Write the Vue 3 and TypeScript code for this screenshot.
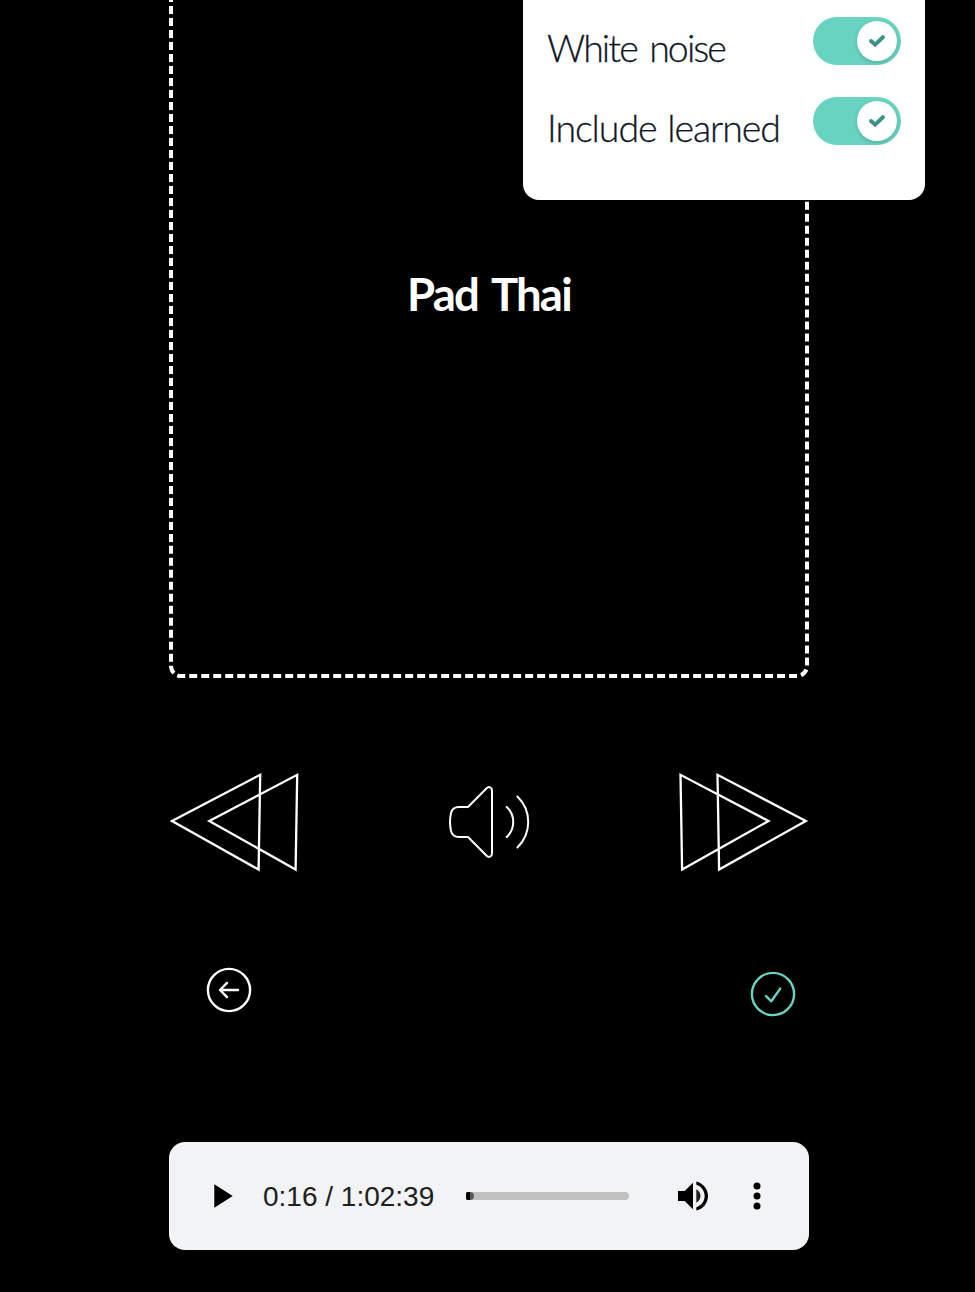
<script setup lang="ts">
interface Option {
  key: string
  label: string
}

const options: Option[] = [
  { key: 'noise', label: 'White noise' },
  { key: 'learned', label: 'Include learned' },
]

const word = 'Pad Thai'
const time = '0:16 / 1:02:39'
</script>

<template>
  <main class="page">
    <section class="card">
      <svg class="outline" width="640" height="678" viewBox="0 0 640 678">
        <path d="M638 -14.3V666A10 10 0 0 1 628 676H12A10 10 0 0 1 2 666V-14" />
      </svg>
      <h1 class="word">{{ word }}</h1>
    </section>

    <nav class="controls">
      <svg class="line-icon" width="128" height="102" viewBox="169 771 128 102">
        <path d="M172 821L260.2 774.8L258.6 869.6ZM209.3 821L297.2 774.8L295.6 869.6Z" />
      </svg>
      <svg class="line-icon speaker" width="84" height="76" viewBox="447 784 84 76">
        <path d="M468 807L486.6 788.3C488.8 786 492 787.2 492 790.6V853.2C492 856.8 488.8 858 486.6 855.8L468 837H458.8C454 837 452 834.8 451 831C449.8 825.5 449.8 818.5 451 813C452 809.2 454 807 458.8 807Z" />
        <path d="M506.7 807Q513.2 813 513.2 822T506.7 837M517.4 796.5Q528.2 807 528.2 822T517.4 847.5" />
      </svg>
      <svg class="line-icon" width="128" height="102" viewBox="681 771 128 102">
        <path d="M805.8 821L717.5 774.8L719.1 869.6ZM768.5 821L680.5 774.8L682.1 869.6Z" />
      </svg>
    </nav>

    <div class="actions">
      <svg class="round" width="46" height="46" viewBox="0 0 46 46">
        <circle cx="23" cy="23" r="21.1" />
        <path d="M32 23H14.5M21 15.9L14 23L21 30.1" />
      </svg>
      <svg class="round done" width="46" height="46" viewBox="0 0 46 46">
        <circle cx="23" cy="23" r="21.1" />
        <path d="M16 25.1L21.3 30.3L30.2 17.6" />
      </svg>
    </div>

    <section class="player">
      <svg class="play" width="40" height="40" viewBox="0 0 24 24"><path d="M8 5v14l11-7z" /></svg>
      <span class="time">{{ time }}</span>
      <div class="track"><div class="buffered"></div><div class="played"></div></div>
      <svg class="volume" width="40" height="40" viewBox="0 0 24 24">
        <path d="M3 9v6h4l5 5V4L7 9H3zM14 3.23v2.06c2.89.86 5 3.54 5 6.71s-2.11 5.85-5 6.71v2.06c4.01-.91 7-4.49 7-8.77s-2.99-7.86-7-8.77z" />
        <path class="wave" d="M16.5 12c0-1.77-1.02-3.29-2.5-4.03v8.05c1.48-.73 2.5-2.25 2.5-4.02z" />
      </svg>
      <svg class="more" width="40" height="40" viewBox="0 0 24 24">
        <circle cx="12" cy="6" r="2.1" /><circle cx="12" cy="12" r="2.1" /><circle cx="12" cy="18" r="2.1" />
      </svg>
    </section>

    <aside class="settings">
      <div v-for="option in options" :key="option.key" class="option">
        <span class="label" :class="option.key">{{ option.label }}</span>
        <span class="toggle">
          <span class="knob">
            <svg width="40" height="40" viewBox="0 0 40 40"><path d="M14 20.1L18.1 23.6L25.9 16.2" /></svg>
          </span>
        </span>
      </div>
    </aside>
  </main>
</template>

<style>
body {
  margin: 0;
  background: #000;
}
</style>

<style scoped>
.page {
  position: relative;
  box-sizing: border-box;
  width: 975px;
  height: 1292px;
  padding: 0 166px 0 169px;
  overflow: hidden;
  background: #000;
  font-family: Lato, "Liberation Sans", sans-serif;
}
svg {
  display: block;
  flex: none;
}
.card {
  display: grid;
  height: 678px;
}
.outline,
.word {
  grid-area: 1 / 1;
}
.outline path {
  fill: none;
  stroke: #fff;
  stroke-width: 4;
  stroke-dasharray: 8 3.997;
}
.word {
  justify-self: center;
  margin: 266px 0 0;
  color: #fff;
  font-size: 45.5px;
  font-weight: 700;
  line-height: 56px;
  letter-spacing: -1.8px;
  word-spacing: 5px;
  white-space: nowrap;
}
.controls {
  display: flex;
  justify-content: space-between;
  align-items: center;
  height: 102px;
  margin-top: 93px;
}
.line-icon {
  overflow: visible;
  fill: none;
  stroke: #fff;
  stroke-width: 2.3;
}
.speaker {
  stroke-width: 2;
  stroke-linecap: round;
  stroke-linejoin: round;
}
.actions {
  display: flex;
  justify-content: space-between;
  margin-top: 94px;
  padding: 0 13px 0 37px;
}
.round {
  fill: none;
  stroke: #fff;
  stroke-width: 2.4;
  stroke-linecap: round;
  stroke-linejoin: round;
}
.round.done {
  margin-top: 4px;
  stroke: #68d3c0;
}
.player {
  display: flex;
  align-items: center;
  box-sizing: border-box;
  height: 108px;
  margin-top: 125px;
  padding: 0 32px;
  border-radius: 16px;
  background: #f1f3f5;
}
.time {
  width: 171px;
  margin: 0 32px 0 22px;
  padding-top: 2px;
  color: #202020;
  font: 28px/32px "Liberation Sans", Arial, sans-serif;
  white-space: nowrap;
}
.track {
  display: grid;
  width: 163px;
  height: 8px;
  overflow: hidden;
  border-radius: 2px 4px 4px 2px;
  background: #c1c1c1;
}
.buffered,
.played {
  grid-area: 1 / 1;
}
.buffered {
  width: 8px;
  border-radius: 0 4px 4px 0;
  background: #5c5c5c;
}
.played {
  width: 4px;
  background: #000;
}
.volume {
  margin-left: 44px;
}
.wave {
  fill: #222;
}
.more {
  margin-left: 24px;
}
.settings {
  position: absolute;
  top: 0;
  left: 523px;
  box-sizing: border-box;
  width: 402px;
  height: 200px;
  padding: 17px 24px 0;
  border-radius: 0 0 16px 16px;
  background: #fff;
}
.option {
  display: flex;
  justify-content: space-between;
  height: 80px;
}
.label {
  padding-top: 7px;
  color: #111827;
  font-size: 37.5px;
  font-weight: 300;
  line-height: 48px;
  white-space: nowrap;
  -webkit-text-stroke: 0.3px #111827;
}
.label.noise {
  letter-spacing: -1.9px;
  word-spacing: 4px;
}
.label.learned {
  letter-spacing: -1.05px;
  word-spacing: 1.5px;
}
.toggle {
  display: flex;
  justify-content: flex-end;
  box-sizing: border-box;
  width: 88px;
  height: 48px;
  padding: 4px;
  border-radius: 24px;
  background: #68d3c0;
}
.knob {
  width: 40px;
  height: 40px;
  border-radius: 50%;
  background: #fff;
  box-shadow: 0 2px 4px rgba(0, 0, 0, 0.15);
}
.knob path {
  fill: none;
  stroke: #3d9287;
  stroke-width: 4;
  stroke-linecap: round;
}
</style>
